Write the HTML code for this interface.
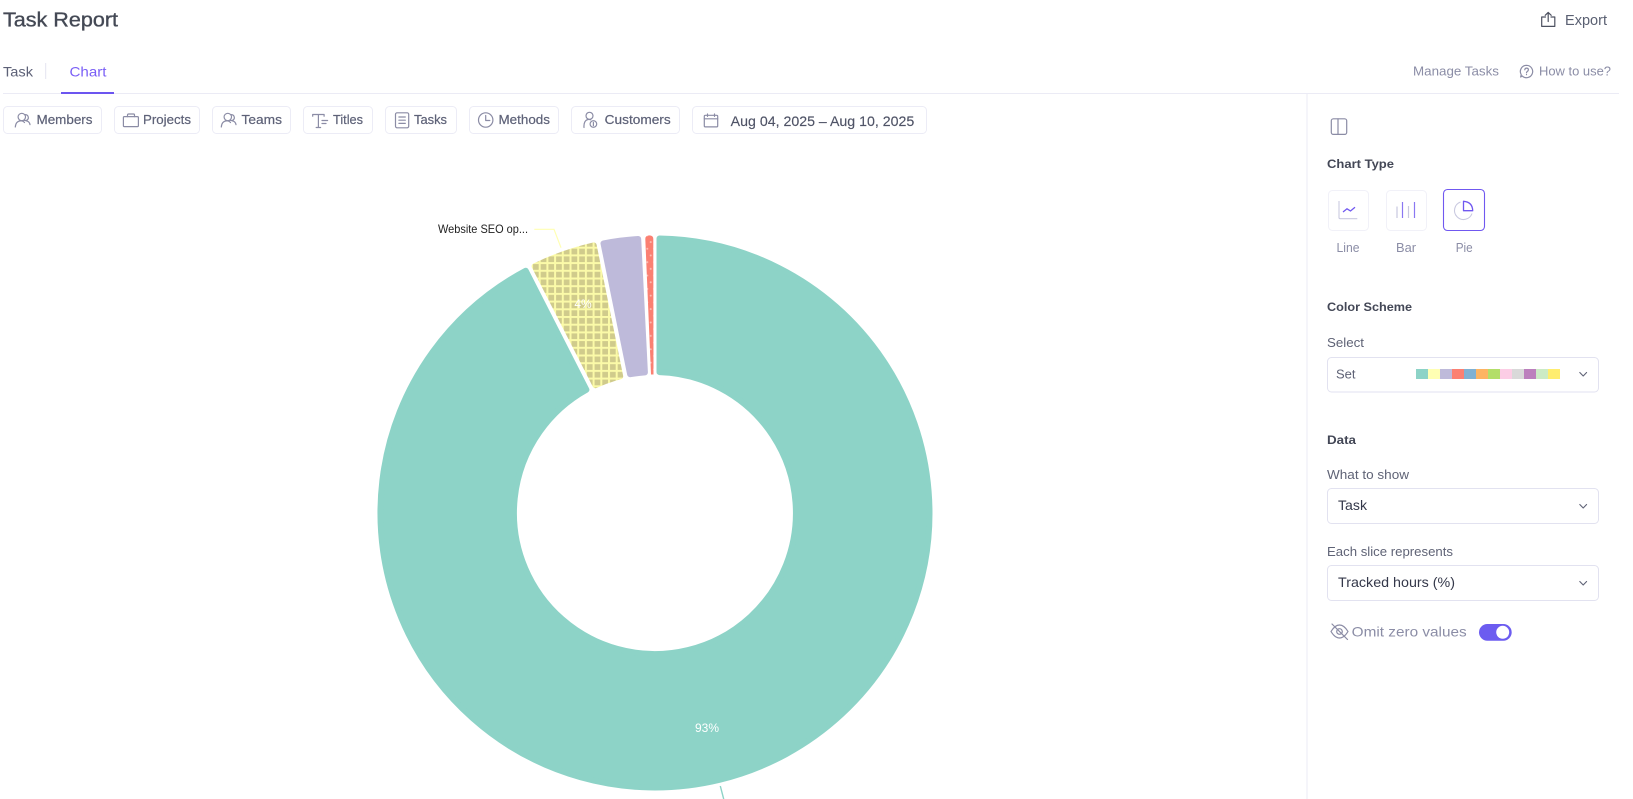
<!DOCTYPE html>
<html lang="en">
<head>
<meta charset="utf-8">
<title>Task Report</title>
<style>
html,body{margin:0;padding:0;background:#fff;width:1633px;height:799px;overflow:hidden}
svg{display:block;position:absolute;left:0;top:0}
text{font-family:"Liberation Sans",Arial,sans-serif}
.t{fill:#5d6177;font-size:13px}
.m{stroke:#5d6177;stroke-width:.2px}
.g{fill:#8b8da6;font-size:12.5px}
.h{fill:#434756;font-size:12px;font-weight:700}
.l{fill:#5f6376;font-size:12.5px}
.i{fill:none;stroke:#8b8ca5;stroke-width:1.2;stroke-linecap:round;stroke-linejoin:round}
.b{fill:#fff;stroke:#ececf6;stroke-width:1}
.s{fill:#fff;stroke:#e2e2f0;stroke-width:1}
.c{fill:none;stroke:#5f6376;stroke-width:1.1;stroke-linecap:round;stroke-linejoin:round}
</style>
</head>
<body>
<svg width="1633" height="799" viewBox="0 0 1633 799" xmlns="http://www.w3.org/2000/svg">
<defs>
<pattern id="grid" patternUnits="userSpaceOnUse" x="531" y="239" width="7.7" height="7.7">
<rect width="7.7" height="7.7" fill="#fbfaa8"/>
<rect x="2" y="2" width="5.7" height="5.7" fill="#d0cb8c"/>
</pattern>
<pattern id="dots" patternUnits="userSpaceOnUse" x="645" y="232" width="6.8" height="13.4">
<rect width="6.8" height="13.4" fill="#fb8072"/>
<circle cx="2.3" cy="3.3" r="1" fill="#fdbdb4"/>
<circle cx="5.7" cy="10" r="1" fill="#fdbdb4"/>
</pattern>
</defs>

<!-- Header -->
<text x="3" y="26.5" font-size="20" fill="#444955" stroke="#444955" stroke-width=".35" textLength="115" lengthAdjust="spacingAndGlyphs">Task Report</text>
<g class="i" style="stroke:#4d5160">
<path d="M1545.5 17H1541.7V26.4H1554.8V17H1551"/>
<path d="M1548.2 21.5V12.5M1545.2 15.3L1548.2 12.4L1551.2 15.3"/>
</g>
<text x="1565" y="25" font-size="14.5" fill="#5a6072" textLength="42" lengthAdjust="spacingAndGlyphs">Export</text>

<!-- Tabs -->
<text x="3" y="76.5" font-size="14" fill="#5d6177" textLength="30" lengthAdjust="spacingAndGlyphs">Task</text>
<rect x="45" y="63" width="1.2" height="16" fill="#e9e9f3"/>
<text x="69.5" y="76.5" font-size="14" fill="#7a5ff6" textLength="37" lengthAdjust="spacingAndGlyphs">Chart</text>
<rect x="3" y="93" width="1616" height="1" fill="#ebebf5"/>
<rect x="61" y="92" width="53" height="2" fill="#6c55f0"/>
<text x="1413" y="75.5" class="g" textLength="86" lengthAdjust="spacingAndGlyphs">Manage Tasks</text>
<g class="i">
<path d="M1526.5 65.3a6.2 6.2 0 1 1-4.4 10.6l-1.4 1.1.5-2.4a6.2 6.2 0 0 1 5.3-9.3z"/>
<path d="M1524.8 69.8c.1-2.3 3.6-2.2 3.6 0 0 1.6-1.9 1.5-1.9 3"/>
<path d="M1526.5 74.5v.1"/>
</g>
<text x="1539" y="75.5" class="g" textLength="72" lengthAdjust="spacingAndGlyphs">How to use?</text>

<!-- Panel divider -->
<rect x="1306.5" y="94" width="1" height="705" fill="#ebebf5"/>

<!-- Filter buttons -->
<rect class="b" x="3.5" y="106.5" width="98" height="27" rx="4"/>
<rect class="b" x="114.5" y="106.5" width="85" height="27" rx="4"/>
<rect class="b" x="212.5" y="106.5" width="78" height="27" rx="4"/>
<rect class="b" x="303.5" y="106.5" width="69" height="27" rx="4"/>
<rect class="b" x="385.5" y="106.5" width="71" height="27" rx="4"/>
<rect class="b" x="469.5" y="106.5" width="89" height="27" rx="4"/>
<rect class="b" x="571.5" y="106.5" width="108" height="27" rx="4"/>
<rect class="b" x="692.5" y="106.5" width="234" height="27" rx="4"/>

<g class="i">
<circle cx="21.8" cy="117" r="3.7"/>
<path d="M15.3 127c.3-4 2.5-6 5.5-6.2 1.5 0 2.8.6 3.7 1.7"/>
<path d="M25.5 114.6a3 3 0 0 1 1.6 5.4c-1 .6-2 .6-3 .3"/>
<path d="M26 120.8c2 .2 3.6 1.6 4 3.8"/>

<rect x="123.4" y="116.6" width="15" height="10" rx="1"/>
<path d="M127.5 116.6v-1.6c0-.6.4-1 1-1h5c.6 0 1 .4 1 1v1.6"/>

<circle cx="227.8" cy="117" r="3.7"/>
<path d="M221.3 127c.3-4 2.5-6 5.5-6.2 1.5 0 2.8.6 3.7 1.7"/>
<path d="M231.5 114.6a3 3 0 0 1 1.6 5.4c-1 .6-2 .6-3 .3"/>
<path d="M232 120.8c2 .2 3.6 1.6 4 3.8"/>

<path d="M312.7 116.2v-1.7h11.4v1.7M318.4 114.5v13M316.2 127.5h4.4M322 120.5h5.6M322 123.5h4"/>

<rect x="395.5" y="112.8" width="13.2" height="15" rx="1.5"/>
<path d="M398.9 117h6.4M398.9 120.2h6.4M398.9 123.4h6.4"/>

<circle cx="485.7" cy="120" r="7.2"/>
<path d="M485.7 115.5V120.5H489.8"/>

<circle cx="589.5" cy="115.8" r="3.5"/>
<path d="M584 127.5c-.4-4.5 1.2-7.6 4.2-8 .8-.1 1.7 0 2.4.3"/>
<circle cx="593.4" cy="124" r="3.3"/>
<path d="M593.4 122.4v3.2"/>

<rect x="704.3" y="115.3" width="13.4" height="11.6" rx="1"/>
<path d="M704.3 118.8h13.4M707.5 114v2.4M714.5 114v2.4"/>
</g>

<text x="36.5" y="124" class="t m" textLength="56" lengthAdjust="spacingAndGlyphs">Members</text>
<text x="143" y="124" class="t m" textLength="48" lengthAdjust="spacingAndGlyphs">Projects</text>
<text x="241.5" y="124" class="t m" textLength="40.5" lengthAdjust="spacingAndGlyphs">Teams</text>
<text x="333" y="124" class="t m" textLength="30" lengthAdjust="spacingAndGlyphs">Titles</text>
<text x="414" y="124" class="t m" textLength="33" lengthAdjust="spacingAndGlyphs">Tasks</text>
<text x="498.5" y="124" class="t m" textLength="51.5" lengthAdjust="spacingAndGlyphs">Methods</text>
<text x="604.7" y="124" class="t m" textLength="66" lengthAdjust="spacingAndGlyphs">Customers</text>
<text x="730.7" y="126" font-size="14" fill="#4f5366" stroke="#4f5366" stroke-width=".15" textLength="183.6" lengthAdjust="spacingAndGlyphs">Aug 04, 2025 – Aug 10, 2025</text>

<!-- Chart -->
<path d="M659.5 238.5A274.5 274.5 0 1 1 525.7 270.8L586.4 389.8A141 141 0 1 0 659.5 372.1Z" fill="#8dd3c7" stroke="#8dd3c7" stroke-width="6" stroke-linejoin="round"/>
<path d="M534.6 266.3A274.5 274.5 0 0 1 593.7 245.4L620.2 376.4A141 141 0 0 0 595.4 385.2Z" fill="url(#grid)" stroke="url(#grid)" stroke-width="6" stroke-linejoin="round"/>
<path d="M603.5 243.4A274.5 274.5 0 0 1 638.2 239L644.9 372.4A141 141 0 0 0 630.1 374.2Z" fill="#bebada" stroke="#bebada" stroke-width="6" stroke-linejoin="round"/>
<path d="M645.3 239Q645.3 235.5 649.2 235.4Q653.3 235.4 653.3 239L653.5 374.5L651 374.5Z" fill="url(#dots)"/>
<path d="M534.3 229.3H554L561 247.7" fill="none" stroke="#ffffb3" stroke-width="1.2"/>
<path d="M720.3 786L723.7 799" fill="none" stroke="#8dd3c7" stroke-width="1.4"/>
<text x="438" y="232.8" font-size="12" fill="#222" textLength="90" lengthAdjust="spacingAndGlyphs">Website SEO op...</text>
<text x="583" y="308" font-size="12" fill="#fff" text-anchor="middle">4%</text>
<text x="707" y="732" font-size="12" fill="#fff" text-anchor="middle">93%</text>

<!-- Panel -->
<g class="i">
<rect x="1331.3" y="118.8" width="15.4" height="15.6" rx="2"/>
<path d="M1338 118.8V134.4"/>
</g>

<text x="1327" y="168" class="h" textLength="67" lengthAdjust="spacingAndGlyphs">Chart Type</text>
<rect x="1328.5" y="190.5" width="40" height="40" rx="4" fill="#fff" stroke="#f1f1f8"/>
<rect x="1386.5" y="190.5" width="40" height="40" rx="4" fill="#fff" stroke="#f1f1f8"/>
<rect x="1443.5" y="189.5" width="41" height="41" rx="4" fill="#fff" stroke="#7058f0" stroke-width="1.1"/>
<path d="M1339 201V217.5Q1339 218.7 1340.2 218.7H1357.3" fill="none" stroke="#c9c9e0" stroke-width="1.1"/>
<path d="M1343 212L1347 208.8L1350.5 211L1355 207.2" fill="none" stroke="#7058f0" stroke-width="1.3"/>
<path d="M1397 206.5V218M1408.5 206V218" stroke="#c9c9e0" stroke-width="1.2" fill="none"/>
<path d="M1402.5 202V218M1414.5 202V218" stroke="#8a77f2" stroke-width="1.2" fill="none"/>
<path d="M1460.5 202A9 9 0 1 0 1472 213.5" fill="none" stroke="#c9c9e0" stroke-width="1.1"/>
<path d="M1463.5 201.3V210.7H1472.7Q1472.5 202 1463.5 201.3Z" fill="none" stroke="#7058f0" stroke-width="1.3" stroke-linejoin="round"/>
<text x="1336.5" y="252" class="g" textLength="23" lengthAdjust="spacingAndGlyphs">Line</text>
<text x="1396" y="252" class="g" textLength="20" lengthAdjust="spacingAndGlyphs">Bar</text>
<text x="1455.7" y="252" class="g" textLength="17" lengthAdjust="spacingAndGlyphs">Pie</text>

<text x="1327" y="311" class="h" textLength="85" lengthAdjust="spacingAndGlyphs">Color Scheme</text>
<text x="1327" y="347" class="l" textLength="37" lengthAdjust="spacingAndGlyphs">Select</text>
<rect class="s" x="1327.5" y="357.5" width="271" height="34.5" rx="4"/>
<text x="1336" y="378.5" font-size="13" fill="#5f6376" textLength="19.5" lengthAdjust="spacingAndGlyphs">Set</text>
<rect x="1416" y="369" width="12" height="10" fill="#8dd3c7"/>
<rect x="1428" y="369" width="12" height="10" fill="#ffffb3"/>
<rect x="1440" y="369" width="12" height="10" fill="#bebada"/>
<rect x="1452" y="369" width="12" height="10" fill="#fb8072"/>
<rect x="1464" y="369" width="12" height="10" fill="#80b1d3"/>
<rect x="1476" y="369" width="12" height="10" fill="#fdb462"/>
<rect x="1488" y="369" width="12" height="10" fill="#b3de69"/>
<rect x="1500" y="369" width="12" height="10" fill="#fccde5"/>
<rect x="1512" y="369" width="12" height="10" fill="#d9d9d9"/>
<rect x="1524" y="369" width="12" height="10" fill="#bc80bd"/>
<rect x="1536" y="369" width="12" height="10" fill="#ccebc5"/>
<rect x="1548" y="369" width="12" height="10" fill="#ffed6f"/>
<path class="c" d="M1579.8 372.5L1583.2 376L1586.6 372.5"/>

<text x="1327" y="444" class="h" textLength="29" lengthAdjust="spacingAndGlyphs">Data</text>
<text x="1327" y="479" class="l" textLength="82" lengthAdjust="spacingAndGlyphs">What to show</text>
<rect class="s" x="1327.5" y="488.5" width="271" height="35" rx="4"/>
<text x="1338" y="510" font-size="14" fill="#34384a" textLength="29" lengthAdjust="spacingAndGlyphs">Task</text>
<path class="c" d="M1579.8 504.5L1583.2 508L1586.6 504.5"/>

<text x="1327" y="556" class="l" textLength="126" lengthAdjust="spacingAndGlyphs">Each slice represents</text>
<rect class="s" x="1327.5" y="565.5" width="271" height="35" rx="4"/>
<text x="1338" y="587" font-size="14" fill="#34384a" textLength="117" lengthAdjust="spacingAndGlyphs">Tracked hours (%)</text>
<path class="c" d="M1579.8 581.5L1583.2 585L1586.6 581.5"/>

<g class="i">
<path d="M1331 631.5C1334 626.5 1337 625 1339.5 625C1342 625 1345 626.5 1348 631.5C1345 636.5 1342 638 1339.5 638C1337 638 1334 636.5 1331 631.5Z"/>
<circle cx="1339.5" cy="631.5" r="2.8"/>
<path d="M1332 624L1347.5 639.5"/>
</g>
<text x="1351.7" y="636.7" font-size="14" fill="#8b8da6" textLength="115" lengthAdjust="spacingAndGlyphs">Omit zero values</text>
<rect x="1479" y="624" width="32.7" height="16.7" rx="8.35" fill="#6c5cf0"/>
<circle cx="1502.7" cy="632.3" r="6.5" fill="#fff"/>
</svg>
</body>
</html>
